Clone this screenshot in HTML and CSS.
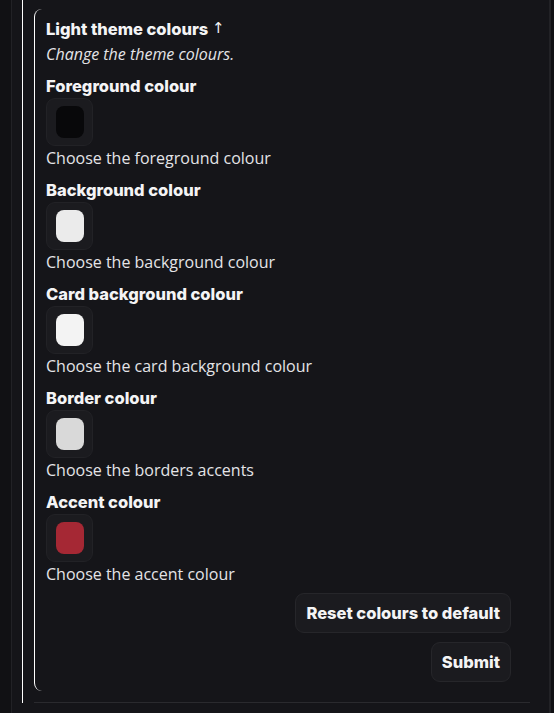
FILE: index.html
```html
<!DOCTYPE html>
<html lang="en">
<head>
<meta charset="utf-8">
<link rel="stylesheet" href="styles.css">
</head>
<body>
<div class="page">
  <div class="shell">
    <div class="section">
      <div class="fieldset">
        <div class="group intro">
          <div class="title">Light theme colours <span class="arrow">↑</span></div>
          <div class="desc">Change the theme colours.</div>
        </div>
        <div class="group">
          <div class="label">Foreground colour</div>
          <div class="swatch"><div class="chip" style="background:#08080a"></div></div>
          <div class="help">Choose the foreground colour</div>
        </div>
        <div class="group">
          <div class="label">Background colour</div>
          <div class="swatch"><div class="chip" style="background:#ebebeb"></div></div>
          <div class="help">Choose the background colour</div>
        </div>
        <div class="group">
          <div class="label">Card background colour</div>
          <div class="swatch"><div class="chip" style="background:#f3f3f3"></div></div>
          <div class="help">Choose the card background colour</div>
        </div>
        <div class="group">
          <div class="label">Border colour</div>
          <div class="swatch"><div class="chip" style="background:#d9d9d9"></div></div>
          <div class="help">Choose the borders accents</div>
        </div>
        <div class="group">
          <div class="label">Accent colour</div>
          <div class="swatch"><div class="chip" style="background:#a52834"></div></div>
          <div class="help">Choose the accent colour</div>
        </div>
        <div class="actions">
          <button class="btn" type="button">Reset colours to default</button>
          <button class="btn" type="submit">Submit</button>
        </div>
      </div>
      <div class="rule"></div>
    </div>
  </div>
</div>
</body>
</html>
```

FILE: styles.css
```css
html, body {
  margin: 0;
  padding: 0;
  background: #111114;
  height: 713px;
  overflow: hidden;
}

.page {
  display: flex;
  height: 713px;
  padding-left: 11px;
}

.shell {
  width: 527px;
  background: #151519;
  border-left: 1px solid #222226;
  border-right: 2px solid #222226;
  padding-left: 10px;
}

.section {
  border-left: 1.5px solid #ffffff;
  padding-left: 10.5px;
  padding-top: 9px;
  padding-right: 19px;
}

.fieldset {
  border-left: 1.5px solid #ffffff;
  border-radius: 8px 0 0 8px;
  padding: 9px 0 9px 11.5px;
  margin-right: 9px;
  display: flex;
  flex-direction: column;
  gap: 8px;
}

.group {
  display: flex;
  flex-direction: column;
  align-items: flex-start;
}

.title, .label, .btn {
  font-family: "Inter", "Noto Sans", sans-serif;
  font-weight: 800;
  color: #f4f4f5;
  font-size: 16.5px;
  line-height: 24px;
}

.title {
  line-height: 23px;
}

.arrow {
  font-family: "DejaVu Sans", sans-serif;
  font-weight: 400;
  font-size: 15px;
  position: relative;
  top: -2px;
}

.desc {
  font-family: "Open Sans", sans-serif;
  font-style: italic;
  font-size: 16px;
  line-height: 24px;
  color: #e4e4e7;
}

.help {
  font-family: "Open Sans", sans-serif;
  font-size: 16px;
  line-height: 24px;
  color: #e4e4e7;
}

.swatch {
  box-sizing: border-box;
  width: 47px;
  height: 48px;
  padding: 7px 9px;
  background: #1b1b1f;
  border: 1px solid #222226;
  border-radius: 9px;
}

.chip {
  width: 28px;
  height: 32px;
  border-radius: 8px;
}

.actions {
  display: flex;
  flex-direction: column;
  align-items: flex-end;
  gap: 9px;
  margin-top: -1px;
  margin-right: 10px;
}

.btn {
  height: 40px;
  padding: 0 10px;
  background: #1b1b1f;
  border: 1px solid #26262a;
  border-radius: 9px;
  cursor: pointer;
}

.rule {
  margin-top: 11px;
  height: 1px;
  background: #2a2a2e;
}
```
